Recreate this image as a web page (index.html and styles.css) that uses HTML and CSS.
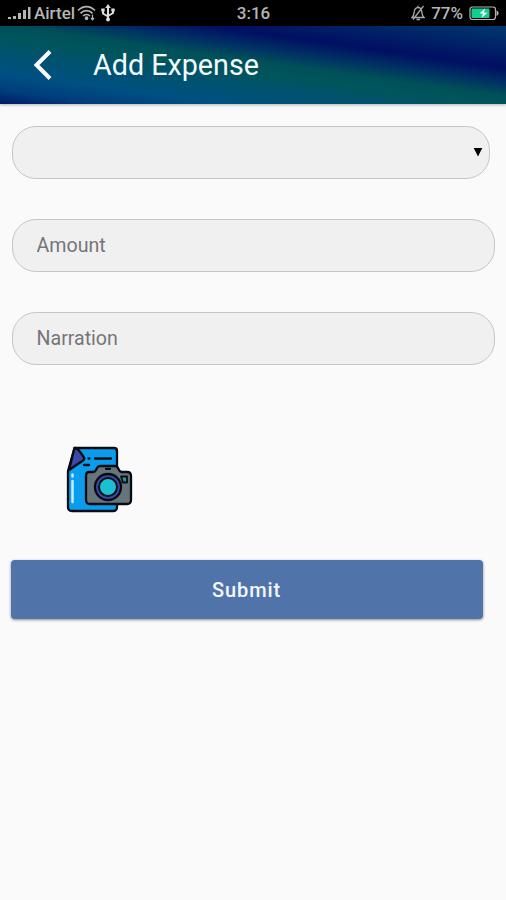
FILE: index.html
```
<!DOCTYPE html>
<html lang="en">
<head>
    <meta charset="UTF-8">
    <meta name="viewport" content="width=device-width, initial-scale=1.0">
    <title>Add Expense</title>
    <link rel="stylesheet" href="styles.css">
</head>
<body>
    <div class="status-bar">
        <div class="status-left">
            <svg class="signal" width="24" height="14" viewBox="0 0 24 14" fill="#b5b5b5">
                <rect x="0" y="11" width="3" height="2"/>
                <rect x="5" y="10" width="3" height="3"/>
                <rect x="10" y="7" width="3" height="6"/>
                <rect x="15" y="4" width="3" height="9"/>
                <rect x="20" y="1" width="2.5" height="12"/>
            </svg>
            <span class="carrier">Airtel</span>
            <svg class="wifi" width="19" height="16" viewBox="0 0 19 16" fill="none" stroke="#b5b5b5" stroke-width="1.7">
                <path d="M1 5.500C6 .2 13 .2 18 5.500"/>
                <path d="M3.500 8.300C7 4.800 12 4.800 15.500 8.300"/>
                <path d="M6 11c2-2 5-2 7 0"/>
                <circle cx="9.500" cy="13.200" r="1" fill="#b5b5b5"/>
                <path d="M15.500 9.500v5M14 13l1.500 1.800L17 13" stroke-width="1.200"/>
            </svg>
            <svg class="usb" width="14" height="18" viewBox="0 0 14 18" fill="none" stroke="#dedede" stroke-width="2">
                <path d="M7 3v12M2 6v3.500l5 3M12 6v3l-5 3"/>
                <path d="M7 0l2.800 4H4.200z" fill="#dedede" stroke="none"/>
                <circle cx="7" cy="15.500" r="2" fill="#dedede" stroke="none"/>
                <path d="M.3 4.500h3.400v3H.3zM10.300 4.500h3.400v3h-3.400z" fill="#dedede" stroke="none"/>
            </svg>
        </div>
        <span class="clock">3:16</span>
        <div class="status-right">
            <svg class="bell" width="14" height="16" viewBox="0 0 14 16" fill="none" stroke="#a8a8a8" stroke-width="1.300">
                <path d="M1 12.500c2-1.500 2-3 2.200-5.500C3.500 4 5 2.700 7 2.500s3.700 1.700 3.800 4.500c.2 2.500.2 4 2.200 5.500zM7 .8v2M5.500 14.500h3.500M12.500 1L2 14.500"/>
            </svg>
            <span class="percent">77%</span>
            <svg class="battery" width="30" height="15" viewBox="0 0 30 15">
                <rect x="1" y="1" width="25.500" height="12.500" rx="2.500" fill="none" stroke="#b5b5b5" stroke-width="1.200"/>
                <rect x="2.500" y="2.500" width="18" height="9.500" rx="1" fill="#10cf8d"/>
                <path d="M27.500 4.500q2 .3 2 2.700t-2 2.700z" fill="#b5b5b5"/>
                <path d="M16 2.500L10.500 7.500h3.500L12.500 12 18.500 6.800H15z" fill="#fff"/>
            </svg>
        </div>
    </div>

    <div class="header">
        <svg class="back" width="22" height="32" viewBox="0 0 22 32" fill="none" stroke="#fff" stroke-width="4">
            <path d="M19 2.500L5.500 16 19 29.500"/>
        </svg>
        <h1>Add Expense</h1>
    </div>

    <form class="expense-form">
        <div class="field select-field">
            <svg width="10" height="9" viewBox="0 0 10 9"><path d="M.7 0h8.600L5 8.500z"/></svg>
        </div>
        <input class="field" type="text" placeholder="Amount">
        <input class="field" type="text" placeholder="Narration">

        <svg class="camera" width="68" height="68" viewBox="0 0 68 68" stroke="#080b12" stroke-width="2.300" stroke-linejoin="round" stroke-linecap="round">
            <path d="M8.500 2H48q3 0 3 3v56q0 4-4 4H6q-4 0-4-4V25z" fill="#0a9dee"/>
            <path d="M8.500 2c3 0 4 2 6 4.500l3.500 5q1 1.500-1 3L3 24z" fill="#3b4aa8"/>
            <path d="M22.500 12.500h1M29 12.500h16M18 19h5"/>
            <path d="M6.500 28.500v2M6.500 35v21" stroke="#c6efff" stroke-width="2.500"/>
            <path d="M23 26h4q2 0 3-2l1-2q1-2 3-2h15q2 0 3 2l1 2q1 2 3 2h5q4 0 4 4v24q0 4-4 4H24q-4 0-4-4V30q0-4 3-4z" fill="#66747c"/>
            <path d="M40 22.800h4"/>
            <circle cx="42" cy="41" r="13" fill="#3b4aa8"/>
            <circle cx="42" cy="41" r="9" fill="#1bc0d2" stroke-width="2"/>
            <path d="M55 30.500h6v6h-4z" fill="#169f9b" stroke-width="1.800"/>
        </svg>

        <button class="submit" type="button">Submit</button>
    </form>
</body>
</html>
```

FILE: styles.css
```
* {
    box-sizing: border-box;
}
body {
    margin: 0;
    min-height: 900px;
    background: #fafafa;
    font-family: Roboto, sans-serif;
}
svg {
    display: block;
    flex-shrink: 0;
}
.status-bar {
    display: grid;
    grid-template-columns: 1fr auto 1fr;
    align-items: center;
    height: 26px;
    padding: 0 7px 0 8px;
    background: #000;
    color: #b5b5b5;
    font-size: 17px;
    font-weight: 500;
    line-height: 26px;
}
.status-left,
.status-right {
    display: flex;
    align-items: center;
}
.status-right {
    justify-content: flex-end;
}
.carrier {
    margin-left: 2px;
}
.wifi {
    margin-left: 2px;
}
.usb {
    margin-left: 5px;
}
.percent {
    margin: 0 6px;
}
.header {
    display: flex;
    align-items: center;
    height: 78px;
    padding-left: 31px;
    background: linear-gradient(188deg, #003870 0%, #002468 14%, #000f62 28%, #003064 38%, #005058 47%, #00555c 55%, #005270 66%, #005082 79%, #003c7c 91%, #001868 100%);
    box-shadow: 0 1px 3px rgba(0, 0, 0, 0.3);
}
.header h1 {
    margin: 0 0 0 40px;
    color: #f4fbff;
    font-size: 28.7px;
    font-weight: 400;
}
.expense-form {
    display: flex;
    flex-direction: column;
    align-items: flex-start;
    padding: 22px 11px 0 12px;
}
.field {
    width: 100%;
    height: 53px;
    margin: 0 0 40px;
    padding: 0 23.5px;
    border: 1.5px solid #c6c6c6;
    border-radius: 24px;
    background: #f0f0f0;
    font-family: inherit;
    font-size: 19.6px;
}
.field::placeholder {
    color: #757579;
}
.select-field {
    display: flex;
    align-items: center;
    justify-content: flex-end;
    width: 478px;
    padding: 0 6px;
}
.camera {
    margin: 41px 0 0 54px;
}
.submit {
    width: 472px;
    height: 59px;
    margin: 46px 0 0 -1px;
    padding: 0 7px 0 6px;
    border: 0;
    border-radius: 4px;
    background: #5074aa;
    box-shadow: 0 1px 3px rgba(0, 0, 0, 0.45);
    color: #f2f6ff;
    font-family: inherit;
    font-size: 20px;
    font-weight: 500;
    letter-spacing: 0.9px;
}
```
